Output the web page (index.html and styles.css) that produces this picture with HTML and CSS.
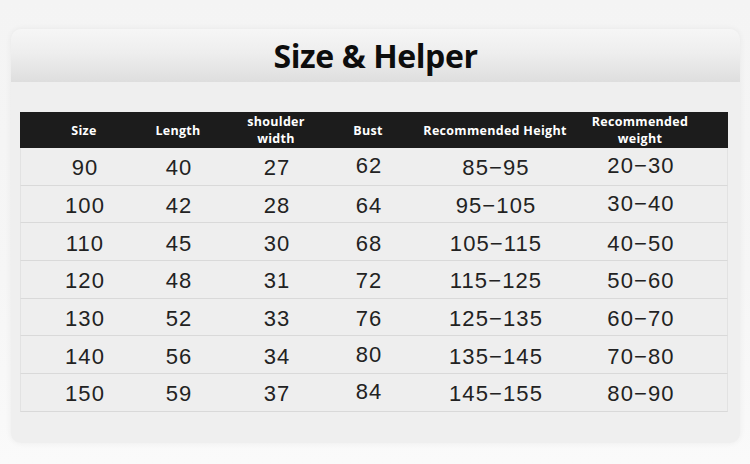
FILE: index.html
```html
<!DOCTYPE html>
<html lang="en">
<head>
<meta charset="utf-8">
<title>Size &amp; Helper</title>
<link rel="stylesheet" href="styles.css">
</head>
<body>
<div class="page">
  <div class="card">
    <div class="card-head"><h1 class="title">Size &amp; Helper</h1></div>
    <div class="card-body">
      <div class="table">
        <div class="row head">
          <div class="cell">Size</div>
          <div class="cell">Length</div>
          <div class="cell">shoulder<br>width</div>
          <div class="cell">Bust</div>
          <div class="cell">Recommended Height</div>
          <div class="cell">Recommended<br>weight</div>
        </div>
        <div class="row"><div class="cell">90</div><div class="cell">40</div><div class="cell">27</div><div class="cell up">62</div><div class="cell">85−95</div><div class="cell up">20−30</div></div>
        <div class="row"><div class="cell">100</div><div class="cell">42</div><div class="cell">28</div><div class="cell">64</div><div class="cell">95−105</div><div class="cell up">30−40</div></div>
        <div class="row"><div class="cell">110</div><div class="cell">45</div><div class="cell">30</div><div class="cell">68</div><div class="cell">105−115</div><div class="cell">40−50</div></div>
        <div class="row"><div class="cell">120</div><div class="cell">48</div><div class="cell">31</div><div class="cell">72</div><div class="cell">115−125</div><div class="cell">50−60</div></div>
        <div class="row"><div class="cell">130</div><div class="cell">52</div><div class="cell">33</div><div class="cell">76</div><div class="cell">125−135</div><div class="cell">60−70</div></div>
        <div class="row"><div class="cell">140</div><div class="cell">56</div><div class="cell">34</div><div class="cell up">80</div><div class="cell">135−145</div><div class="cell">70−80</div></div>
        <div class="row"><div class="cell">150</div><div class="cell">59</div><div class="cell">37</div><div class="cell up">84</div><div class="cell">145−155</div><div class="cell">80−90</div></div>
      </div>
    </div>
  </div>
</div>
</body>
</html>
```
FILE: styles.css
```css
html, body {
  margin: 0;
  padding: 0;
}
body {
  width: 750px;
  height: 464px;
  overflow: hidden;
  background: linear-gradient(180deg, #f4f4f4 0%, #f6f6f6 60%, #fafafa 100%);
  font-family: "Liberation Sans", Arial, sans-serif;
}
.page {
  padding: 29px 10px 21px 11px;
}
.card {
  height: 414px;
  border-radius: 10px;
  background: #efefef;
  box-shadow: 0 0 6px rgba(0, 0, 0, 0.06);
  overflow: hidden;
  display: flex;
  flex-direction: column;
}
.card-head {
  height: 53px;
  background: linear-gradient(180deg, #f6f6f6 0%, #eeeeee 45%, #dedede 100%);
  display: flex;
  align-items: center;
  justify-content: center;
}
.title {
  margin: 0;
  font-family: "Open Sans", sans-serif;
  font-weight: 700;
  font-size: 32px;
  letter-spacing: -0.4px;
  color: #0d0d0d;
  line-height: 1;
  padding-top: 1px;
}
.card-body {
  padding: 30px 12px 0 9px;
}
.table {
  display: flex;
  flex-direction: column;
}
.row {
  display: grid;
  grid-template-columns: 128px 60px 136px 48px 206px 84px 46px;
  height: 37.7px;
  background: #eeeeee;
  border-bottom: 1px solid #d9d9d9;
  border-left: 1px solid #e2e2e2;
  border-right: 1px solid #e2e2e2;
  box-sizing: border-box;
  font-size: 22px;
  letter-spacing: 1.1px;
  color: #222222;
}
.row .cell {
  display: flex;
  align-items: center;
  justify-content: center;
  white-space: nowrap;
  padding-top: 4px;
  box-sizing: border-box;
}
.row .cell.up {
  padding-top: 0;
}
.row.head {
  height: 36px;
  background: #1c1c1c;
  border: none;
  font-family: "Open Sans", sans-serif;
  font-weight: 700;
  font-size: 12.5px;
  letter-spacing: 0.3px;
  line-height: 17px;
  color: #ffffff;
}
.row.head .cell {
  text-align: center;
  padding-top: 0;
}
```
